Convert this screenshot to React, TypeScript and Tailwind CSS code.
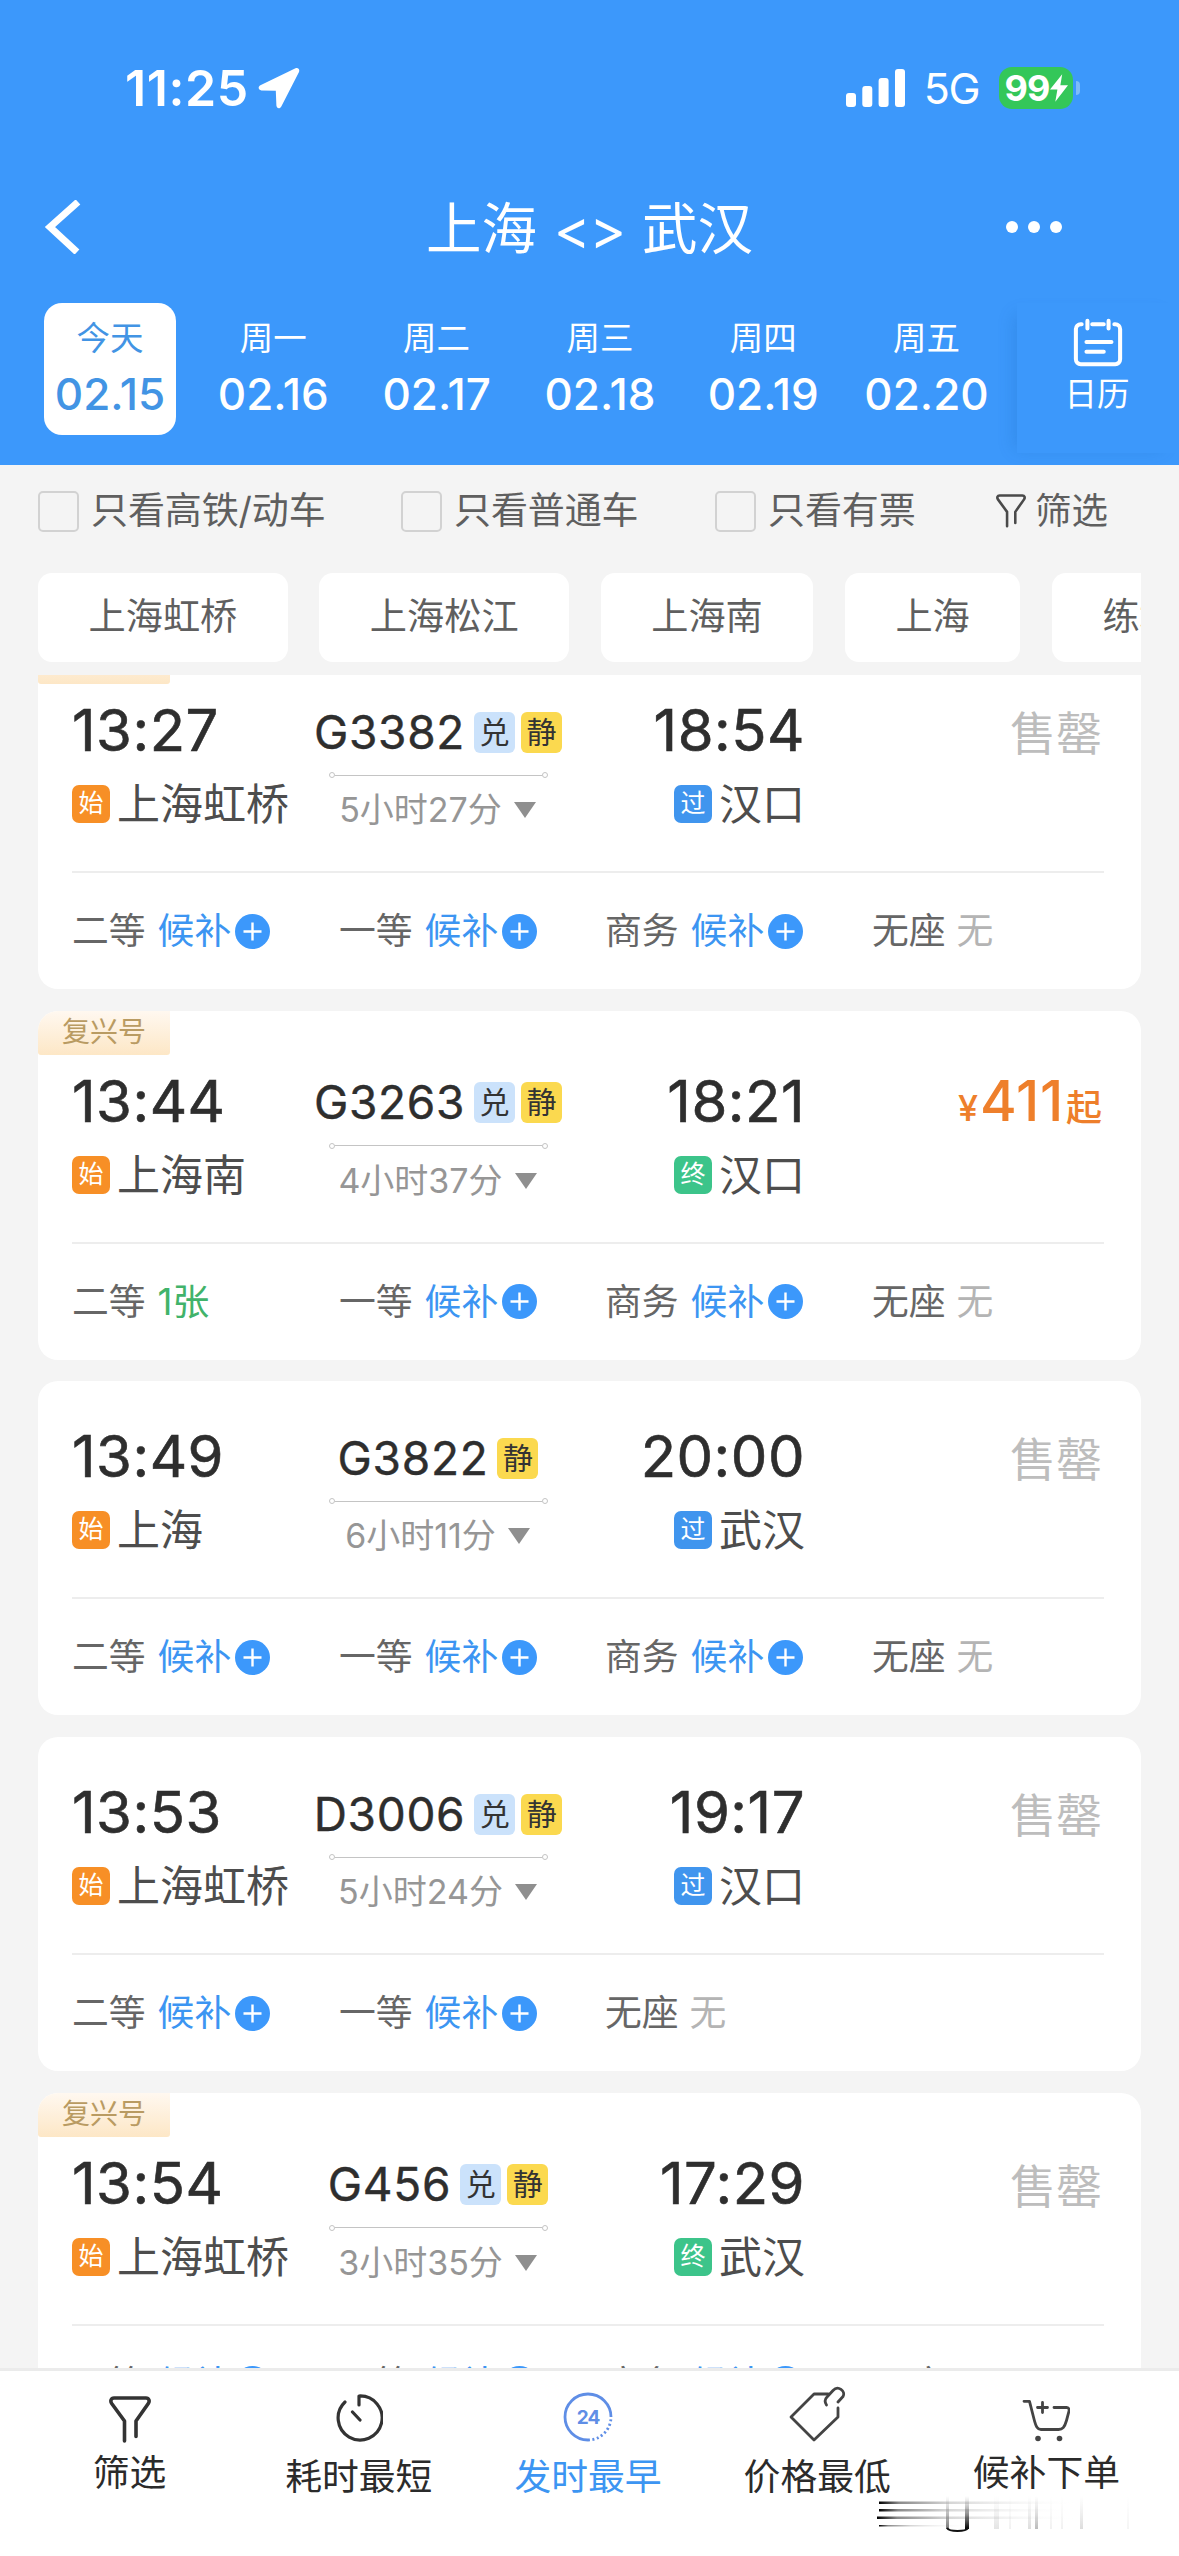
import { type ReactNode } from 'react'

const days = [
  { label: '今天', date: '02.15' },
  { label: '周一', date: '02.16' },
  { label: '周二', date: '02.17' },
  { label: '周三', date: '02.18' },
  { label: '周四', date: '02.19' },
  { label: '周五', date: '02.20' },
]

type Seat = { name: string; left: string }
type Train = {
  no: string
  depart: string
  arrive: string
  from: string
  to: string
  end: '过' | '终'
  duration: string
  tags: string[]
  fuxing?: boolean
  price?: string
  seats: Seat[]
}

const waitAll: Seat[] = [
  { name: '二等', left: '候补' },
  { name: '一等', left: '候补' },
  { name: '商务', left: '候补' },
  { name: '无座', left: '无' },
]

const trains: Train[] = [
  { no: 'G3382', depart: '13:27', arrive: '18:54', from: '上海虹桥', to: '汉口', end: '过', duration: '5小时27分', tags: ['兑', '静'], fuxing: true, seats: waitAll },
  {
    no: 'G3263', depart: '13:44', arrive: '18:21', from: '上海南', to: '汉口', end: '终', duration: '4小时37分', tags: ['兑', '静'], fuxing: true, price: '411',
    seats: [{ name: '二等', left: '1张' }, ...waitAll.slice(1)],
  },
  { no: 'G3822', depart: '13:49', arrive: '20:00', from: '上海', to: '武汉', end: '过', duration: '6小时11分', tags: ['静'], seats: waitAll },
  {
    no: 'D3006', depart: '13:53', arrive: '19:17', from: '上海虹桥', to: '汉口', end: '过', duration: '5小时24分', tags: ['兑', '静'],
    seats: [waitAll[0], waitAll[1], waitAll[3]],
  },
  { no: 'G456', depart: '13:54', arrive: '17:29', from: '上海虹桥', to: '武汉', end: '终', duration: '3小时35分', tags: ['兑', '静'], fuxing: true, seats: waitAll },
]

function StatusBar() {
  return (
    <div className="flex h-[150px] items-start justify-between pl-[125px] pr-[99px] pt-[64px]">
      <div className="flex h-[48px] items-center gap-[9px]">
        <span className="text-[50px] font-semibold leading-none tracking-[0.600px]">11:25</span>
        <svg width="42" height="42" viewBox="0 0 42 42" fill="white">
          <path d="M37.500 1.200 2.400 18.300c-2.800 1.500-2 5 1 5.100l14.400.4.6 14.800c.2 3 3.600 3.500 4.900.8L41 5C42 2.200 40 .2 37.500 1.200Z" />
        </svg>
      </div>
      <div className="flex h-[48px] items-center">
        <svg width="59" height="38" viewBox="0 0 59 38" fill="white">
          <rect x="0" y="24" width="10" height="14" rx="3" />
          <rect x="16.300" y="17" width="10" height="21" rx="3" />
          <rect x="32.600" y="9" width="10" height="29" rx="3" />
          <rect x="49" y="0" width="10" height="38" rx="3" />
        </svg>
        <span className="ml-[19px] text-[43px] leading-none tracking-[-1.500px]">5G</span>
        <div className="ml-[20px] flex h-[42px] w-[74px] items-center justify-center rounded-[13px] bg-[#34c759]">
          <span className="text-[36px] font-bold leading-none tracking-[-0.800px]">99</span>
          <svg width="18" height="30" viewBox="0 0 17 26" fill="white">
            <path d="M11.500 0 0 14.500h7L5 26 17 10.500H9.800Z" />
          </svg>
        </div>
        <div className="ml-[3px] h-[14px] w-[4px] rounded-r-full bg-[#7ebcf9]" />
      </div>
    </div>
  )
}

function TitleBar() {
  return (
    <div className="grid h-[153px] grid-cols-[1fr_auto_1fr] items-start">
      <svg className="ml-[44px] mt-[50px]" width="38" height="54" viewBox="0 0 38 54" fill="none" stroke="white" strokeWidth="7">
        <path d="M34 2 6 27l27 25" />
      </svg>
      <h1 className="mt-[37px] whitespace-nowrap text-[55.500px] leading-[84px]">
        上海 <span className="inline-block w-[74px] text-center tracking-[-1px]">&lt;&gt;</span> 武汉
      </h1>
      <div className="ml-auto mr-[117px] mt-[71px] flex gap-[10px]">
        {[0, 1, 2].map((i) => (
          <span key={i} className="size-[12px] rounded-full bg-white" />
        ))}
      </div>
    </div>
  )
}

function DateStrip() {
  return (
    <div className="flex h-[162px] items-start">
      <div className="flex w-[989px] gap-[31.300px] pl-[44px]">
        {days.map((d, i) => (
          <div
            key={d.date}
            className={`flex h-[132px] w-[132px] shrink-0 flex-col items-center rounded-[18px] ${i === 0 ? 'bg-white text-[#4294e4]' : ''}`}
          >
            <span className="mt-[14px] text-[33.500px] leading-[42px]">{d.label}</span>
            <span className="mt-[8px] text-[44px] font-medium leading-[54px]">{d.date}</span>
          </div>
        ))}
      </div>
      <div className="ml-auto flex h-[150px] w-[162px] flex-col items-center bg-[#3c98fb] pt-[15px] shadow-[-10px_4px_16px_-8px_rgba(20,90,170,0.22)]">
        <svg className="ml-[-1px]" width="50" height="50" viewBox="0 0 52 52" fill="none" stroke="white" strokeWidth="4.200" strokeLinecap="round">
          <path d="M9 6.500H8a5 5 0 0 0-5 5V43a5 5 0 0 0 5 5h36a5 5 0 0 0 5-5V11.500a5 5 0 0 0-5-5h-1M20 6.500h12M15 3v8M37 3v8M14 25h26M14 35h18" />
        </svg>
        <span className="ml-[-2px] mt-[4px] text-[32.500px] leading-[46px]">日历</span>
      </div>
    </div>
  )
}

function Funnel({ size, color }: { size: number; color: string }) {
  return (
    <svg width={size} height={size * 1.12} viewBox="0 0 42 47" fill="none" stroke={color} strokeWidth="3.600" strokeLinecap="round" strokeLinejoin="round">
      <path d="M15.500 45V25L2.700 7.500C1 5 2 2 5 2h32c3 0 4 3 2.300 5.500L27 25v15.500" />
    </svg>
  )
}

function Check({ children, className }: { children: ReactNode; className?: string }) {
  return (
    <label className={`flex items-center ${className ?? ''}`}>
      <span className="size-[41px] rounded-[5px] border-2 border-[#d2d2d2]" />
      <span className="ml-[12px] text-[37px] leading-[50px] tracking-[-0.100px]">{children}</span>
    </label>
  )
}

function Filters() {
  return (
    <div className="text-[#5f5f5f]">
      <div className="flex h-[108px] items-center pb-[16px] pl-[38px]">
        <Check className="w-[363px]">只看高铁/动车</Check>
        <Check className="w-[314px]">只看普通车</Check>
        <Check className="w-[281px]">只看有票</Check>
        <Funnel size={30} color="#4a4a4a" />
        <span className="ml-[9px] text-[36.500px] leading-[50px]">筛选</span>
      </div>
      <div className="mx-[38px] flex h-[102px] gap-[31.600px] overflow-hidden">
        {['上海虹桥', '上海松江', '上海南', '上海', '练塘'].map((s) => (
          <span key={s} className="h-[89px] shrink-0 rounded-[14px] bg-white px-[50.500px] text-[37.200px] leading-[87px]">
            {s}
          </span>
        ))}
      </div>
    </div>
  )
}

const markColors = {
  始: 'bg-[#f78f26]',
  过: 'bg-[#4095ee]',
  终: 'bg-[#3cc48a]',
}

function Clock({ time }: { time: string }) {
  return <div className="text-[58px] leading-[70px] tracking-[0.500px] text-[#2e2e2e] [-webkit-text-stroke:0.6px_#2e2e2e]">{time}</div>
}

function Station({ mark, name }: { mark: '始' | '过' | '终'; name: string }) {
  return (
    <div className="mt-[9px] flex h-[60px] items-center text-[43px] leading-[60px] text-[#4d4d4d]">
      <span className={`mr-[7px] size-[38px] rounded-[7px] text-center text-[25px] leading-[37px] text-white ${markColors[mark]}`}>{mark}</span>
      {name}
    </div>
  )
}

function TrainCard({ train }: { train: Train }) {
  return (
    <article className="shrink-0 overflow-hidden rounded-[20px] bg-white">
      {train.fuxing && (
        <div className="h-[44px] w-[132px] rounded-b-[3px] bg-linear-to-b from-[#fff8f0] to-[#fde7c6] text-center text-[28px] leading-[42px] text-[#b99b62]">
          复兴号
        </div>
      )}
      <div className={`flex pl-[34px] pr-[39px] ${train.fuxing ? 'h-[187px] pt-[11px]' : 'h-[216px] pt-[40px]'}`}>
        <div className="w-[241px]">
          <Clock time={train.depart} />
          <Station mark="始" name={train.from} />
        </div>
        <div className="flex w-[250px] flex-col items-center">
          <div className="flex h-[74px] items-center whitespace-nowrap text-[46px] text-[#2e2e2e]">
            <span className="tracking-[0.700px] [-webkit-text-stroke:0.4px_#2e2e2e]">{train.no}</span>
            {train.tags.map((t, i) => (
              <span
                key={t}
                className={`size-[41px] rounded-[6px] text-center text-[30px] leading-[40px] text-[#333] ${t === '兑' ? 'bg-[#cbe2fb]' : 'bg-[#fbd94f]'} ${i === 0 ? 'ml-[9px]' : 'ml-[6px]'}`}
              >
                {t}
              </span>
            ))}
          </div>
          <div className="mt-[3px] flex h-[6px] w-[219px] items-center">
            <span className="size-[6px] rounded-full border border-[#c4c4c4]" />
            <span className="h-px flex-1 bg-[#c4c4c4]" />
            <span className="size-[6px] rounded-full border border-[#c4c4c4]" />
          </div>
          <div className="mt-[7px] flex items-center whitespace-nowrap text-[34px] leading-[50px] text-[#969696]">
            {train.duration}
            <svg className="ml-[11px]" width="24" height="16" viewBox="0 0 24 16" fill="#8f8f8f">
              <path d="M1 0h22L12 16Z" />
            </svg>
          </div>
        </div>
        <div className="flex w-[242px] flex-col items-end">
          <Clock time={train.arrive} />
          <Station mark={train.end} name={train.to} />
        </div>
        <div className="flex-1 text-right">
          {train.price ? (
            <div className="whitespace-nowrap font-medium leading-[70px] text-[#ee7f2b]">
              <span className="mr-[2px] text-[36px]">¥</span>
              <span className="text-[56px] tracking-[0.700px]">{train.price}</span>
              <span className="ml-[2px] text-[36px]">起</span>
            </div>
          ) : (
            <div className="text-[46px] leading-[76px] text-[#bdbdbd]">售罄</div>
          )}
        </div>
      </div>
      <div className="ml-[34px] mr-[37px] grid h-[118px] grid-cols-[267px_266px_267px_1fr] items-center border-t-2 border-[#ededed] text-[36.800px] leading-[50px] text-[#666]">
        {train.seats.map((s) => (
          <div key={s.name} className="flex items-center">
            {s.name}
            {s.left === '候补' && (
              <>
                <span className="ml-[12px] text-[#3c95f2]">候补</span>
                <svg className="ml-[4px]" width="35" height="35" viewBox="0 0 35 35">
                  <circle cx="17.500" cy="17.500" r="17.500" fill="#3c98fb" />
                  <path d="M17.500 8.500v18M8.500 17.500h18" stroke="white" strokeWidth="2.400" />
                </svg>
              </>
            )}
            {s.left === '1张' && <span className="ml-[12px] text-[#41b36a]">1张</span>}
            {s.left === '无' && <span className="ml-[11px] text-[#b4b4b4]">无</span>}
          </div>
        ))}
      </div>
    </article>
  )
}

function TimerIcon() {
  return (
    <svg width="48" height="48" viewBox="0 0 48 48" fill="none" stroke="#333" strokeWidth="3.200" strokeLinecap="round" strokeLinejoin="round">
      <path d="M24 11V2a22 22 0 1 1-14 6M17.500 18l7.500 8" />
    </svg>
  )
}

function Clock24() {
  return (
    <svg width="50" height="50" viewBox="0 0 50 50" fill="none" stroke="#5f8ee6" strokeWidth="2.800">
      <path d="M48 25A23 23 0 1 0 25 48" />
      <path d="M25 48A23 23 0 0 0 48 25" strokeDasharray="2 2.500" />
      <text x="25" y="32" textAnchor="middle" fontSize="19" fontWeight="700" letterSpacing="-1" fill="#5f8ee6" stroke="none">
        24
      </text>
    </svg>
  )
}

function TagIcon() {
  return (
    <svg width="57" height="57" viewBox="0 0 57 57" fill="none" stroke="#444" strokeWidth="2.800" strokeLinecap="round" strokeLinejoin="round">
      <path d="M39 9H25L2 32l23 23 24-23v-9" />
      <path d="M37.500 20c-2-3-1.500-6 .5-8l6-6.500c5-5.500 13 .5 10 6L49 17" />
    </svg>
  )
}

function CartIcon() {
  return (
    <svg width="48" height="44" viewBox="0 0 48 44" fill="none" stroke="#444" strokeWidth="2.800" strokeLinecap="round" strokeLinejoin="round">
      <path d="M2 2.300h5.500L12 20c2 8 3.500 10.500 7 10.500h17.500c4 0 6-2 8-9L47 12c.5-2-.5-3.500-2.500-3.500H32M20.500 3.500v10M15.500 8.500h10" />
      <circle cx="16" cy="39.500" r="2.800" fill="#444" stroke="none" />
      <circle cx="37.500" cy="39.500" r="2.800" fill="#444" stroke="none" />
    </svg>
  )
}

function Tab({ icon, label, active, low }: { icon: ReactNode; label: string; active?: boolean; low?: boolean }) {
  return (
    <div className={`flex flex-1 flex-col items-center text-[36.800px] leading-[50px] ${active ? 'text-[#3c95f2]' : 'text-[#2b2b2b]'}`}>
      <div className={`flex items-end justify-center ${low ? 'h-[73px] pb-[1px]' : 'h-[77px] pb-[6px]'}`}>{icon}</div>
      <span className="mt-[4px]">{label}</span>
    </div>
  )
}

// faded streaks in the lower right corner of the tab bar
function Streaks() {
  return (
    <svg className="absolute bottom-[18px] right-[28px]" width="276" height="42" viewBox="0 0 276 42">
      <defs>
        <linearGradient id="streak" x1="0" x2="1">
          <stop offset="0" stopColor="#000" />
          <stop offset="0.100" stopColor="#8a8a8a" />
          <stop offset="0.350" stopColor="#d5d5d5" />
          <stop offset="1" stopColor="#fff" stopOpacity="0" />
        </linearGradient>
        <linearGradient id="fall" x1="0" y1="0" x2="0" y2="1">
          <stop offset="0" stopColor="#999" stopOpacity="0" />
          <stop offset="1" stopColor="#777" />
        </linearGradient>
        <linearGradient id="fallDark" x1="0" y1="0" x2="0" y2="1">
          <stop offset="0" stopColor="#777" stopOpacity="0" />
          <stop offset="1" stopColor="#000" />
        </linearGradient>
      </defs>
      <g fill="url(#streak)">
        <rect x="4" y="5.500" width="200" height="2.500" />
        <rect x="4" y="13" width="190" height="2.500" />
        <rect x="2" y="20.500" width="200" height="2.500" />
        <rect x="4" y="29" width="90" height="1.500" />
      </g>
      <g fill="url(#fall)">
        <rect x="71" y="0" width="3" height="33" />
        <rect x="119" y="0" width="5" height="33" opacity="0.200" />
        <rect x="134" y="0" width="2" height="33" opacity="0.100" />
        <rect x="153" y="0" width="3" height="33" opacity="0.250" />
        <rect x="160" y="0" width="3" height="33" opacity="0.500" />
        <rect x="175" y="0" width="2" height="33" opacity="0.100" />
        <rect x="186" y="0" width="2" height="33" opacity="0.100" />
        <rect x="205" y="0" width="3" height="33" opacity="0.250" />
        <rect x="252" y="0" width="2" height="33" opacity="0.080" />
      </g>
      <rect x="90" y="0" width="4" height="33" fill="url(#fallDark)" />
      <path d="M72 32c2 4 19 4 21 0" fill="none" stroke="#111" strokeWidth="1.800" />
    </svg>
  )
}

function BottomBar() {
  return (
    <nav className="relative flex h-[188px] shrink-0 border-t-[3px] border-[#ebebeb] bg-white pl-[15px] pr-[18px]">
      <Tab low icon={<Funnel size={42} color="#333" />} label="筛选" />
      <Tab icon={<TimerIcon />} label="耗时最短" />
      <Tab active icon={<Clock24 />} label="发时最早" />
      <Tab icon={<TagIcon />} label="价格最低" />
      <Tab low icon={<CartIcon />} label="候补下单" />
      <Streaks />
    </nav>
  )
}

export default function App() {
  return (
    <div className="flex h-[2556px] w-[1179px] flex-col overflow-hidden bg-[#f4f4f4] font-[Inter,'Noto_Sans_CJK_SC',sans-serif]">
      <header className="h-[465px] shrink-0 bg-[#3c98fb] text-white">
        <StatusBar />
        <TitleBar />
        <DateStrip />
      </header>
      <Filters />
      {/* list is scrolled a little, so the first card starts above the fold */}
      <main className="flex min-h-0 flex-1 flex-col overflow-hidden px-[38px]">
        <div className="-mt-[35px] flex flex-col gap-[21.700px]">
          {trains.map((t) => (
            <TrainCard key={t.no} train={t} />
          ))}
        </div>
      </main>
      <BottomBar />
    </div>
  )
}
